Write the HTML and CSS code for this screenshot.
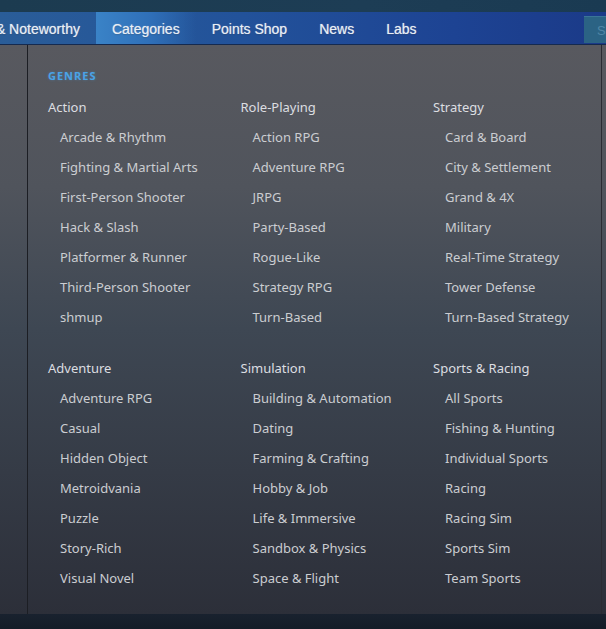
FILE: index.html
```html
<!DOCTYPE html>
<html lang="en">
<head>
    <meta charset="UTF-8">
    <title>Store - Categories</title>
    <link rel="stylesheet" href="styles.css">
</head>
<body>
    <div class="top-strip"></div>
    <div class="nav">
        <div class="nav-items">
            <a href="#" class="nav-item">New &amp; Noteworthy</a>
            <a href="#" class="nav-item active">Categories</a>
            <a href="#" class="nav-item">Points Shop</a>
            <a href="#" class="nav-item">News</a>
            <a href="#" class="nav-item">Labs</a>
        </div>
        <div class="search">Search</div>
    </div>
    <div class="page">
        <div class="dropdown">
            <div class="section-label">Genres</div>
            <div class="genre-grid">
                <div class="genre">
                    <a href="#" class="genre-title">Action</a>
                    <a href="#" class="genre-link">Arcade &amp; Rhythm</a>
                    <a href="#" class="genre-link">Fighting &amp; Martial Arts</a>
                    <a href="#" class="genre-link">First-Person Shooter</a>
                    <a href="#" class="genre-link">Hack &amp; Slash</a>
                    <a href="#" class="genre-link">Platformer &amp; Runner</a>
                    <a href="#" class="genre-link">Third-Person Shooter</a>
                    <a href="#" class="genre-link">shmup</a>
                </div>
                <div class="genre">
                    <a href="#" class="genre-title">Role-Playing</a>
                    <a href="#" class="genre-link">Action RPG</a>
                    <a href="#" class="genre-link">Adventure RPG</a>
                    <a href="#" class="genre-link">JRPG</a>
                    <a href="#" class="genre-link">Party-Based</a>
                    <a href="#" class="genre-link">Rogue-Like</a>
                    <a href="#" class="genre-link">Strategy RPG</a>
                    <a href="#" class="genre-link">Turn-Based</a>
                </div>
                <div class="genre">
                    <a href="#" class="genre-title">Strategy</a>
                    <a href="#" class="genre-link">Card &amp; Board</a>
                    <a href="#" class="genre-link">City &amp; Settlement</a>
                    <a href="#" class="genre-link">Grand &amp; 4X</a>
                    <a href="#" class="genre-link">Military</a>
                    <a href="#" class="genre-link">Real-Time Strategy</a>
                    <a href="#" class="genre-link">Tower Defense</a>
                    <a href="#" class="genre-link">Turn-Based Strategy</a>
                </div>
                <div class="genre">
                    <a href="#" class="genre-title">Adventure</a>
                    <a href="#" class="genre-link">Adventure RPG</a>
                    <a href="#" class="genre-link">Casual</a>
                    <a href="#" class="genre-link">Hidden Object</a>
                    <a href="#" class="genre-link">Metroidvania</a>
                    <a href="#" class="genre-link">Puzzle</a>
                    <a href="#" class="genre-link">Story-Rich</a>
                    <a href="#" class="genre-link">Visual Novel</a>
                </div>
                <div class="genre">
                    <a href="#" class="genre-title">Simulation</a>
                    <a href="#" class="genre-link">Building &amp; Automation</a>
                    <a href="#" class="genre-link">Dating</a>
                    <a href="#" class="genre-link">Farming &amp; Crafting</a>
                    <a href="#" class="genre-link">Hobby &amp; Job</a>
                    <a href="#" class="genre-link">Life &amp; Immersive</a>
                    <a href="#" class="genre-link">Sandbox &amp; Physics</a>
                    <a href="#" class="genre-link">Space &amp; Flight</a>
                </div>
                <div class="genre">
                    <a href="#" class="genre-title">Sports &amp; Racing</a>
                    <a href="#" class="genre-link">All Sports</a>
                    <a href="#" class="genre-link">Fishing &amp; Hunting</a>
                    <a href="#" class="genre-link">Individual Sports</a>
                    <a href="#" class="genre-link">Racing</a>
                    <a href="#" class="genre-link">Racing Sim</a>
                    <a href="#" class="genre-link">Sports Sim</a>
                    <a href="#" class="genre-link">Team Sports</a>
                </div>
            </div>
        </div>
    </div>
    <div class="footer-strip"></div>
</body>
</html>
```

FILE: styles.css
```css
html, body {
    margin: 0;
    padding: 0;
    overflow: hidden;
}
body {
    background-color: #16202d;
    font-family: 'Noto Sans', 'Liberation Sans', sans-serif;
    width: 606px;
}
a {
    text-decoration: none;
}
.top-strip {
    height: 12px;
    background: linear-gradient(90deg, #1c3b50, #1d3d55 60%, #1a3a52);
}
.nav {
    height: 32px;
    display: flex;
    align-items: center;
    justify-content: space-between;
    background: linear-gradient(90deg, #2a5d98 0%, #22529a 40%, #1d4393 75%, #1b3a88 100%);
    border-bottom: 1px solid #152a4f;
    overflow: hidden;
}
.nav-items {
    display: flex;
    height: 100%;
    margin-left: -52px;
}
.nav-item {
    display: flex;
    align-items: center;
    padding: 2px 16px 0;
    color: #e8eef5;
    font-family: 'Liberation Sans', Arial, sans-serif;
    font-size: 14px;
    text-shadow: 0 0 1px rgba(255, 255, 255, 0.6), 0 1px 1px rgba(0, 0, 0, 0.2);
}
.nav-item.active {
    background: linear-gradient(90deg, #3a83c7 0%, #2f6fb8 55%, rgba(40, 90, 165, 0) 100%);
}
.search {
    width: 40px;
    height: 27px;
    margin-right: -18px;
    margin-top: 3px;
    background-color: #2b6384;
    border-top: 1px solid #3a7597;
    color: #4f86a6;
    font-family: 'Liberation Sans', Arial, sans-serif;
    font-size: 13px;
    line-height: 27px;
    padding-left: 13px;
    box-sizing: border-box;
    overflow: hidden;
    white-space: nowrap;
}
.page {
    height: 569px;
    background: linear-gradient(180deg, #58595f 0%, #50545c 25%, #3e4753 50%, #353b46 75%, #2c2f39 100%);
    display: flex;
}
.dropdown {
    margin-left: 27px;
    width: 575px;
    border-left: 1px solid #1c1e24;
    border-right: 1px solid #2a2c33;
    padding: 23px 0 0 20px;
    box-sizing: border-box;
}
.section-label {
    color: #4aa3e6;
    font-size: 11px;
    font-weight: bold;
    letter-spacing: 1px;
    text-transform: uppercase;
    line-height: 16px;
    text-shadow: 0 0 3px rgba(74, 163, 230, 0.4);
}
.genre-grid {
    display: grid;
    grid-template-columns: repeat(3, 192.5px);
    row-gap: 21px;
    margin-top: 8px;
}
.genre {
    display: flex;
    flex-direction: column;
}
.genre-title {
    color: #dcdee1;
    font-size: 13px;
    line-height: 30px;
    white-space: nowrap;
}
.genre-link {
    color: #cbcdd1;
    font-size: 13px;
    line-height: 30px;
    padding-left: 12px;
    white-space: nowrap;
}
.footer-strip {
    height: 15px;
    background: linear-gradient(180deg, #19222f, #141c27);
}
```
